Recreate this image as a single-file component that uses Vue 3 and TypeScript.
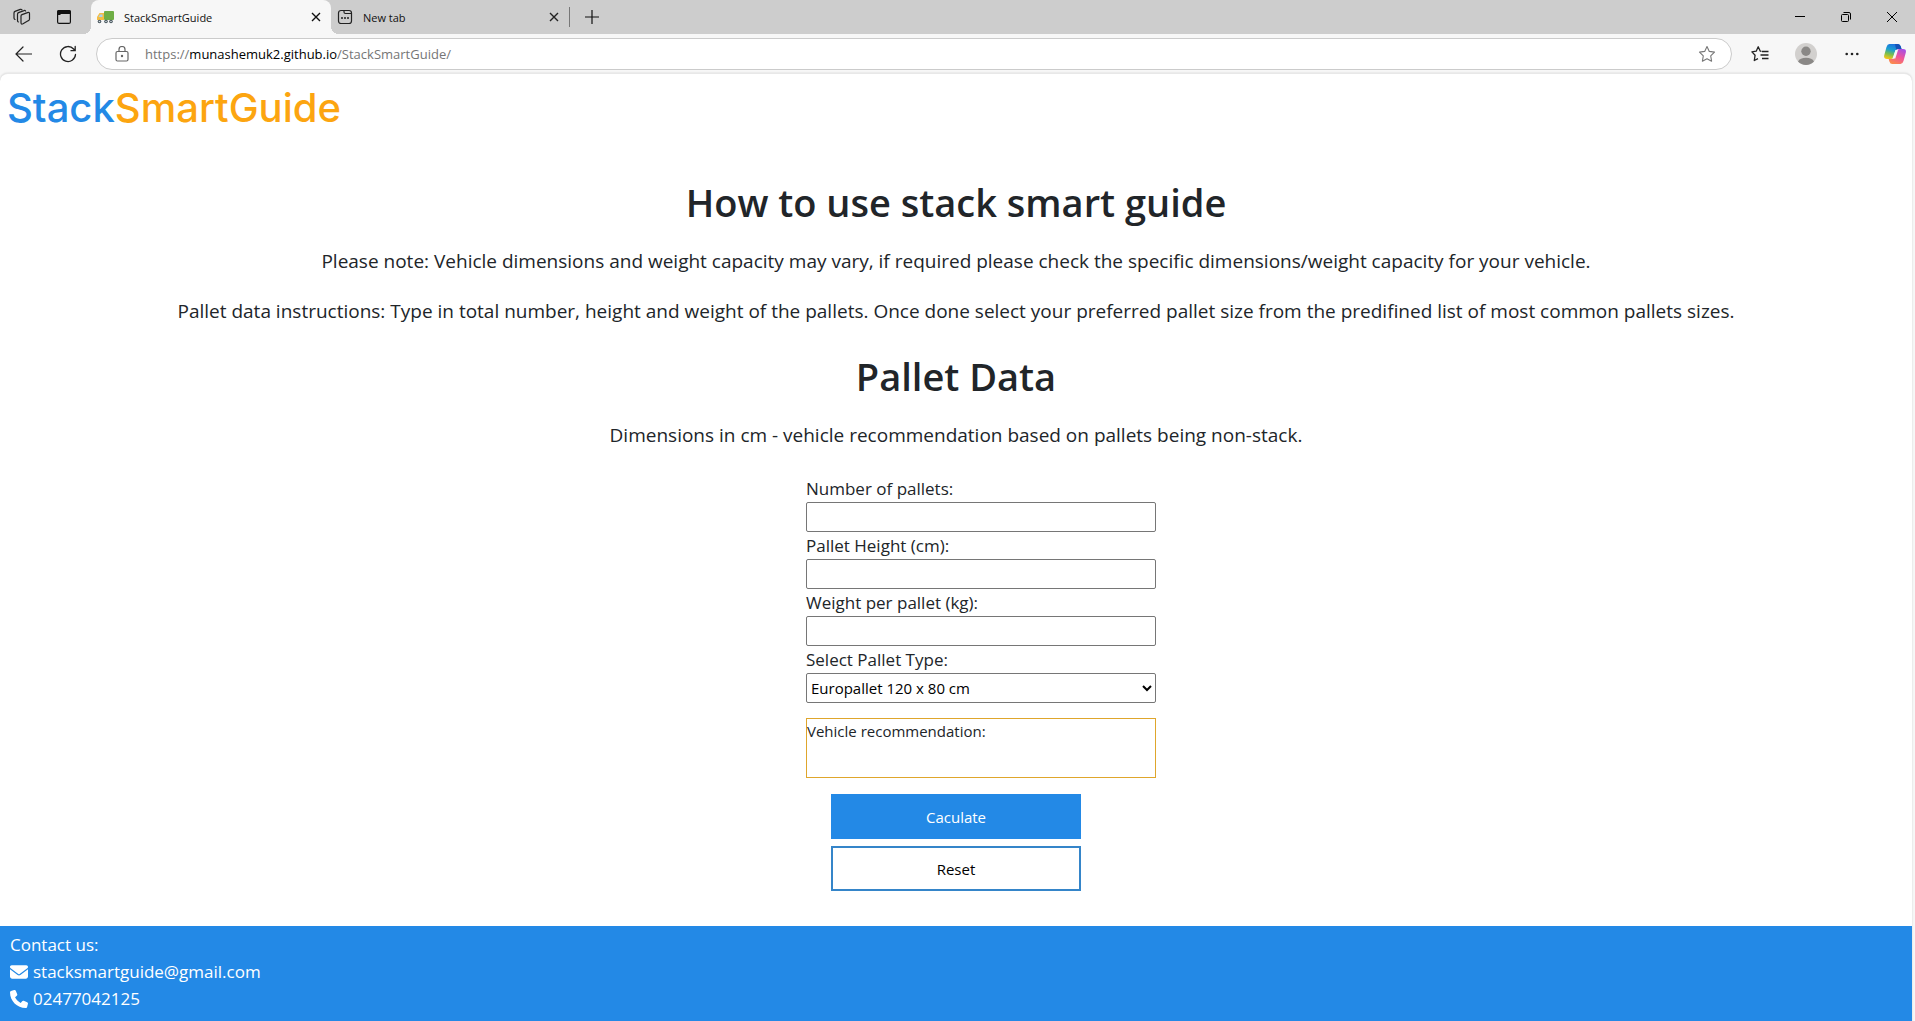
<script setup lang="ts">
import { ref } from 'vue'

interface NumberField {
  id: string
  label: string
}

const fields: NumberField[] = [
  { id: 'pallet-count', label: 'Number of pallets:' },
  { id: 'pallet-height', label: 'Pallet Height (cm):' },
  { id: 'pallet-weight', label: 'Weight per pallet (kg):' },
]

const values = ref<Record<string, string>>({})
const palletType = ref('euro')

function reset(): void {
  values.value = {}
  palletType.value = 'euro'
}
</script>

<template>
  <div class="window">
    <header class="tab-strip">
      <button class="strip-button workspaces" aria-label="Workspaces">
        <svg width="18" height="18" viewBox="0 0 18 18" fill="none" stroke="#222" stroke-width="1.2" stroke-linejoin="round" stroke-linecap="round">
          <path d="M8 8Q8 7 9 6.600L14.500 4.600Q16.500 4 16.500 5.600V11Q16.500 12.200 15.500 12.600L10 15.800Q8 16.600 8 14.800Z" />
          <path d="M5.500 14Q4.500 13.800 4.500 12.500V6.200Q4.500 5 5.500 4.600L11 2.600Q12 2.200 12.600 3" />
          <path d="M2 11.500Q1 11.200 1 10V5Q1 3.800 2 3.400L7.300 1.400Q8.400 1 9 1.800" />
        </svg>
      </button>
      <button class="strip-button actions" aria-label="Tab actions">
        <svg width="14" height="14" viewBox="0 0 14 14" fill="none">
          <rect x=".600" y=".600" width="12.800" height="12.800" rx="1.500" stroke="#111" stroke-width="1.200" />
          <path d="M0 4V2a2 2 0 0 1 2-2h10a2 2 0 0 1 2 2v2H3.500v1H0z" fill="#111" />
        </svg>
      </button>
      <div class="tab active">
        <svg class="tab-icon" width="17" height="14" viewBox="0 0 17 14">
          <rect x="7" y="1" width="10" height="9" rx="1" fill="#6fae45" />
          <path d="M2.500 3H7v7H0V7z" fill="#f3bd45" />
          <path d="M3 4.500h2.500v2.500H1.500z" fill="#a9d3ee" />
          <circle cx="2.500" cy="11.500" r="1.800" fill="#46545c" /><circle cx="2.500" cy="11.500" r=".8" fill="#d7dee2" />
          <circle cx="9" cy="11.500" r="1.800" fill="#46545c" /><circle cx="9" cy="11.500" r=".8" fill="#d7dee2" />
          <circle cx="14" cy="11.500" r="1.800" fill="#46545c" /><circle cx="14" cy="11.500" r=".8" fill="#d7dee2" />
        </svg>
        <span class="tab-title">StackSmartGuide</span>
        <button class="tab-close" aria-label="Close tab">
          <svg width="10" height="10" viewBox="0 0 10 10"><path d="M1 1l8 8M9 1 1 9" stroke="#111" stroke-width="1.400" /></svg>
        </button>
      </div>
      <div class="tab">
        <svg class="tab-icon" width="16" height="16" viewBox="0 0 16 16" fill="none" stroke="#222" stroke-width="1.200">
          <rect x="1.500" y="1.500" width="13" height="13" rx="2.500" />
          <path d="M7 1.500v1.500q0 1.500 1.500 1.500h6" />
          <path d="M4 9h2M7 9h2M10 9h2" stroke-width="1.600" />
        </svg>
        <span class="tab-title">New tab</span>
        <button class="tab-close" aria-label="Close tab">
          <svg width="10" height="10" viewBox="0 0 10 10"><path d="M1 1l8 8M9 1 1 9" stroke="#222" stroke-width="1.400" /></svg>
        </button>
      </div>
      <button class="new-tab" aria-label="New tab">
        <svg width="14" height="14" viewBox="0 0 14 14"><path d="M7 0v14M0 7h14" stroke="#111" stroke-width="1.200" /></svg>
      </button>
      <div class="window-controls">
        <button aria-label="Minimize">
          <svg width="10" height="10" viewBox="0 0 10 10"><path d="M0 4.500h10" stroke="#000" /></svg>
        </button>
        <button aria-label="Restore">
          <svg width="10" height="10" viewBox="0 0 10 10" fill="none" stroke="#000">
            <rect x=".5" y="2.500" width="7" height="7" rx="1" />
            <path d="M2.500.500H8q1.500 0 1.500 1.500v5.500" />
          </svg>
        </button>
        <button aria-label="Close">
          <svg width="10" height="10" viewBox="0 0 10 10"><path d="M0 0l10 10M10 0 0 10" stroke="#000" /></svg>
        </button>
      </div>
    </header>

    <div class="toolbar">
      <button class="tool" aria-label="Back">
        <svg width="18" height="16" viewBox="0 0 18 16" fill="none" stroke="#222" stroke-width="1.200" stroke-linecap="round"><path d="M9 1 2 8l7 7M2 8h15.500" /></svg>
      </button>
      <button class="tool refresh" aria-label="Refresh">
        <svg width="18" height="18" viewBox="0 0 18 18" fill="none" stroke="#222" stroke-width="1.300" stroke-linecap="round"><path d="M16.500 9.500A7.500 7.500 0 1 1 14.600 4L16 5.500M16.200 1.500v4.200H12" /></svg>
      </button>
      <div class="address">
        <svg class="lock" width="14" height="16" viewBox="0 0 14 16" fill="none" stroke="#666" stroke-width="1.200">
          <rect x="1" y="5.500" width="12" height="9.500" rx="1.500" />
          <path d="M4 5.500V3.500a3 3 0 0 1 6 0v2" />
          <circle cx="7" cy="10" r=".6" fill="#666" />
        </svg>
        <div class="url" role="textbox" aria-label="Address" contenteditable="true" spellcheck="false">https://<span class="host">munashemuk2.github.io</span>/StackSmartGuide/</div>
        <button class="star" aria-label="Add to favorites">
          <svg width="18" height="18" viewBox="0 0 18 18" fill="none" stroke="#777" stroke-width="1.100" stroke-linejoin="round"><path d="M9 1.500l2.300 4.900 5.200.7-3.800 3.700.9 5.400L9 13.700l-4.600 2.500.9-5.400L1.500 7.100l5.200-.7z" /></svg>
        </button>
      </div>
      <button class="tool" aria-label="Favorites">
        <svg width="18" height="18" viewBox="0 0 18 18" fill="none" stroke="#222" stroke-width="1.300" stroke-linejoin="round"><path d="M10.500 6.400 9.300 6.200 7.200 1.800 5.200 6.200.900 6.900l3.200 3.300L3.300 15.500 7 13.600M11 6.500h6.500M9.500 10h8M11 13.500h6.500" /></svg>
      </button>
      <button class="tool" aria-label="Profile">
        <svg width="22" height="22" viewBox="0 0 22 22">
          <circle cx="11" cy="11" r="11" fill="#d2d0ce" />
          <circle cx="11" cy="8.300" r="4.700" fill="#8a8886" />
          <path d="M3 18.500a8.500 5.500 0 0 1 16 0A11 11 0 0 1 3 18.500z" fill="#8a8886" />
        </svg>
      </button>
      <button class="tool" aria-label="Settings and more">
        <svg width="14" height="4" viewBox="0 0 14 4" fill="#222"><circle cx="1.700" cy="2" r="1.300" /><circle cx="7" cy="2" r="1.300" /><circle cx="12.300" cy="2" r="1.300" /></svg>
      </button>
      <button class="tool copilot" aria-label="Copilot">
        <svg width="22" height="20" viewBox="0 0 22 20">
          <defs>
            <linearGradient id="cool" x1=".6" y1="0" x2=".3" y2="1">
              <stop offset="0" stop-color="#1c6fe0" /><stop offset=".4" stop-color="#1a9fd0" /><stop offset=".7" stop-color="#7cbf4c" /><stop offset="1" stop-color="#f5c518" />
            </linearGradient>
            <linearGradient id="warm" x1=".8" y1="0" x2=".3" y2="1">
              <stop offset="0" stop-color="#a44fe6" /><stop offset=".5" stop-color="#f0549a" /><stop offset="1" stop-color="#fb8a4c" />
            </linearGradient>
          </defs>
          <path d="M5.500 0H14q2 0 2.800 2.500L17.500 5H14q-2 0-2.700 2l-2 6.500Q8.500 15 6.500 15H3Q-.8 15 .3 11L2.500 3Q3.300 0 5.500 0z" fill="url(#cool)" />
          <path d="M11 0h3q2 0 2.800 2.500L17.500 5H14q-1 0-1.800.7z" fill="#1552b8" />
          <path d="M16.500 20H8.200q-2 0-2.800-2.500L4.700 15H8q2 0 2.700-2l2-6.500Q13.500 5 15.500 5H19q3.800 0 2.700 4l-2.200 8q-.8 3-3 3z" fill="url(#warm)" />
          <path d="M11.500 6H14l-2.700 8.500H8.500z" fill="#f7f7f7" />
        </svg>
      </button>
    </div>

    <div class="page">
      <div class="brand"><span class="brand-stack">Stack</span><span class="brand-guide">SmartGuide</span></div>

      <main class="content">
        <h1>How to use stack smart guide</h1>
        <p>Please note: Vehicle dimensions and weight capacity may vary, if required please check the specific dimensions/weight capacity for your vehicle.</p>
        <p>Pallet data instructions: Type in total number, height and weight of the pallets. Once done select your preferred pallet size from the predifined list of most common pallets sizes.</p>
        <h1>Pallet Data</h1>
        <p>Dimensions in cm - vehicle recommendation based on pallets being non-stack.</p>

        <form class="pallet-form" @submit.prevent>
          <div class="fields">
            <template v-for="field in fields" :key="field.id">
              <label :for="field.id">{{ field.label }}</label>
              <input :id="field.id" v-model="values[field.id]" type="text" inputmode="numeric">
            </template>
            <label for="pallet-type">Select Pallet Type:</label>
            <select id="pallet-type" v-model="palletType">
              <option value="euro">Europallet 120 x 80 cm</option>
            </select>
            <output class="result">Vehicle recommendation:</output>
          </div>
          <button type="submit" class="action primary">Caculate</button>
          <button type="button" class="action secondary" @click="reset">Reset</button>
        </form>
      </main>

      <footer class="contact">
        <div>Contact us:</div>
        <a href="mailto:stacksmartguide@gmail.com">
          <svg width="18" height="18" viewBox="0 0 512 512" fill="#fff"><path d="M48 64C21.500 64 0 85.500 0 112c0 15.100 7.100 29.300 19.200 38.400L236.800 313.600c11.400 8.500 27 8.500 38.400 0L492.800 150.400c12.100-9.100 19.200-23.300 19.200-38.400 0-26.500-21.500-48-48-48H48zM0 176V384c0 35.300 28.700 64 64 64H448c35.300 0 64-28.700 64-64V176L294.400 339.200c-22.800 17.100-54 17.100-76.800 0L0 176z" /></svg>
          <span>stacksmartguide@gmail.com</span>
        </a>
        <a href="tel:02477042125">
          <svg width="18" height="18" viewBox="0 0 512 512" fill="#fff"><path d="M164.900 24.600c-7.700-18.600-28-28.500-47.400-23.200l-88 24C12.100 30.200 0 46 0 64 0 311.400 200.600 512 448 512c18 0 33.800-12.100 38.600-29.500l24-88c5.300-19.400-4.600-39.700-23.200-47.400l-96-40c-16.300-6.800-35.200-2.100-46.300 11.600L304.700 368C234.300 334.700 177.300 277.700 144 207.300L193.300 167c13.700-11.200 18.400-30 11.600-46.300l-40-96z" /></svg>
          <span>02477042125</span>
        </a>
      </footer>
    </div>
  </div>
</template>

<style>
body {
  margin: 0;
  background: #f7f7f7;
}
</style>

<style scoped>
.window {
  display: flex;
  flex-direction: column;
  min-height: 100vh;
  background: #f7f7f7;
  color: #212529;
  font-family: "Open Sans", "Noto Sans", sans-serif;
}

button {
  display: flex;
  align-items: center;
  justify-content: center;
  padding: 0;
  border: 0;
  background: none;
  font: inherit;
}

svg {
  display: block;
  flex: none;
}

.tab-strip {
  display: flex;
  height: 34px;
  background: #cdcdcd;
}

.strip-button {
  width: 42px;
}

.workspaces {
  padding-left: 2px;
}

.actions {
  width: 44px;
  margin-right: 5px;
}

.tab {
  position: relative;
  display: flex;
  align-items: center;
  box-sizing: border-box;
  width: 238px;
  padding: 0 10px 0 6px;
  font-size: 11px;
  color: #111;
}

.tab.active {
  width: 240px;
  border-radius: 8px 8px 0 0;
  background: #f7f7f7;
}

.tab.active::before,
.tab.active::after {
  content: "";
  position: absolute;
  bottom: 0;
  width: 8px;
  height: 8px;
}

.tab.active::before {
  right: 100%;
  background: radial-gradient(circle at 0 0, transparent 8px, #f7f7f7 8px);
}

.tab.active::after {
  left: 100%;
  background: radial-gradient(circle at 100% 0, transparent 8px, #f7f7f7 8px);
}

.tab-title {
  flex: 1;
  margin-left: 10px;
}

.tab-close {
  width: 10px;
  height: 20px;
}

.new-tab {
  align-self: center;
  width: 44px;
  height: 20px;
  border-left: 1px solid #777;
}

.window-controls {
  display: flex;
  margin-left: auto;
}

.window-controls button {
  width: 46px;
}

.toolbar {
  display: flex;
  align-items: center;
  height: 39px;
}

.tool {
  width: 46px;
  height: 32px;
}

.refresh {
  width: 44px;
}

.copilot {
  width: 40px;
}

.address {
  display: flex;
  flex: 1;
  align-items: center;
  box-sizing: border-box;
  height: 32px;
  margin: 0 5px 0 6px;
  padding: 0 15px 0 18px;
  border: 1px solid #cbcbcb;
  border-radius: 16px;
  background: #fff;
}

.url {
  flex: 1;
  margin-left: 16px;
  outline: 0;
  color: #767676;
  font-size: 13px;
}

.host {
  color: #000;
}

.page {
  display: flex;
  flex: 1;
  flex-direction: column;
  margin: 0 3px 0 0;
  overflow: hidden;
  border-top: 1px solid #e8e8e8;
  border-radius: 8px 8px 0 0;
  background: #fff;
  box-shadow: 0 0 2px #ccc;
}

.brand {
  padding: 10px 7px;
  font-family: Inter, sans-serif;
  font-size: 40px;
  font-weight: 500;
  line-height: 48px;
}

.brand-stack {
  color: #2389e6;
}

.brand-guide {
  color: #fca510;
}

.content {
  display: flex;
  flex-direction: column;
  align-items: center;
  padding-top: 36px;
  text-align: center;
}

h1 {
  margin: 0 0 20px;
  font-size: 38px;
  font-weight: 600;
  line-height: 48px;
}

p {
  margin: 0 0 20px;
  font-size: 19px;
  line-height: 30px;
}

p + h1 {
  margin-top: 6px;
}

.pallet-form {
  display: flex;
  flex-direction: column;
  align-items: center;
  padding: 5px 0 35px;
}

.fields {
  display: flex;
  flex-direction: column;
  width: 350px;
  margin: 0 0 16px 50px;
  text-align: left;
}

label {
  font-size: 17px;
  line-height: 27px;
}

input,
select {
  box-sizing: border-box;
  width: 100%;
  height: 30px;
  border: 1px solid #767676;
  border-radius: 2px;
  background-color: #fff;
  color: #000;
  font-family: inherit;
  font-size: 15px;
}

.result {
  box-sizing: border-box;
  height: 60px;
  margin-top: 15px;
  border: 1px solid #dfa62c;
  font-size: 15px;
  line-height: 24px;
}

.action {
  box-sizing: border-box;
  width: 250px;
  height: 45px;
  border: 2px solid #2389e6;
  font-size: 15px;
}

.primary {
  margin-bottom: 7px;
  background: #2389e6;
  color: #fff;
}

.secondary {
  border-color: #3585c9;
  background: #fff;
  color: #000;
}

.contact {
  flex: 1;
  padding: 5px 10px 9px;
  background: #2389e6;
  color: #fff;
  font-size: 17px;
  line-height: 27px;
}

.contact a {
  display: flex;
  align-items: center;
  gap: 5px;
  color: inherit;
  text-decoration: none;
}
</style>
